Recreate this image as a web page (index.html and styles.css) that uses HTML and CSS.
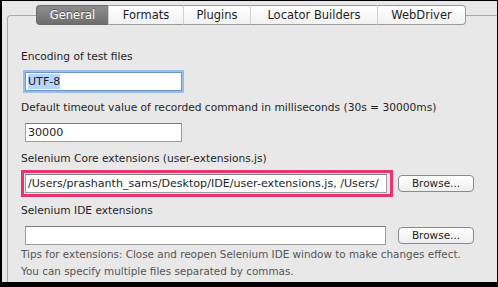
FILE: index.html
```html
<!DOCTYPE html>
<html lang="en">
<head>
    <meta charset="UTF-8">
    <meta name="viewport" content="width=device-width, initial-scale=1.0">
    <title>Selenium IDE Options</title>
    <link rel="stylesheet" href="styles.css">
</head>
<body>
    <div class="window">
        <div class="tabs">
            <div class="tab tab-general selected">General</div>
            <div class="tab tab-formats">Formats</div>
            <div class="tab tab-plugins">Plugins</div>
            <div class="tab tab-locators">Locator Builders</div>
            <div class="tab tab-webdriver">WebDriver</div>
        </div>
        <div class="panel">
            <div class="label">Encoding of test files</div>
            <div class="field short focused"><span class="selection">UTF-8</span></div>

            <div class="label gap">Default timeout value of recorded command in milliseconds (30s = 30000ms)</div>
            <div class="field short">30000</div>

            <div class="label gap">Selenium Core extensions (user-extensions.js)</div>
            <div class="row highlighted-row">
                <div class="highlight">
                    <div class="field long">/Users/prashanth_sams/Desktop/IDE/user-extensions.js, /Users/</div>
                </div>
                <div class="button">Browse...</div>
            </div>

            <div class="label gap-small">Selenium IDE extensions</div>
            <div class="row">
                <div class="field long plain"></div>
                <div class="button">Browse...</div>
            </div>

            <div class="tips">
                Tips for extensions: Close and reopen Selenium IDE window to make changes effect.<br>
                You can specify multiple files separated by commas.
            </div>
        </div>
    </div>
</body>
</html>
```

FILE: styles.css
```css
body {
    margin: 0;
    background-color: #000;
    font-family: "DejaVu Sans", "Liberation Sans", sans-serif;
    color: #1e1e1e;
}
.window {
    box-sizing: border-box;
    width: 498px;
    height: 287px;
    border-style: solid;
    border-color: #000;
    border-width: 1px 1px 5px 2px;
    background-color: #e8e8e8;
    display: flex;
    flex-direction: column;
}

/* tab strip */
.tabs {
    position: relative;
    z-index: 1;
    display: flex;
    margin: 4px 0 0 34px;
    height: 20px;
}
.tab {
    box-sizing: border-box;
    height: 20px;
    line-height: 18px;
    font-size: 11.5px;
    text-align: center;
    border-top: 1px solid #9a9a9a;
    border-bottom: 1px solid #9a9a9a;
    border-left: 1px solid #d0d0d0;
    background: linear-gradient(#ffffff, #f1f1f1);
}
.tab:first-child {
    border-left-color: #8a8a8a;
    border-radius: 4px 0 0 4px;
}
.tab:last-child {
    border-right: 1px solid #9a9a9a;
    border-radius: 0 4px 4px 0;
}
.tab.selected {
    color: #fff;
    border-color: #6a6a6a;
    background: linear-gradient(#8e8e8e, #6e6e6e);
    text-shadow: 0 -1px 0 #555;
}
.tab-general { width: 72px; }
.tab-formats { width: 75px; }
.tab-plugins { width: 67px; }
.tab-locators { width: 127px; }
.tab-webdriver { width: 89px; }

/* panel */
.panel {
    flex: 1;
    margin: -10px 0 0 5px;
    padding: 34px 0 0 13px;
    border-top: 1px solid #a8a8a8;
    border-left: 1px solid #a8a8a8;
    border-top-left-radius: 4px;
}
.label {
    font-size: 10.65px;
    line-height: 14px;
    height: 14px;
    white-space: nowrap;
}
.label.gap {
    margin-top: 10px;
}
.label.gap-small {
    margin-top: 7px;
}
.field {
    box-sizing: border-box;
    height: 19px;
    margin: 8px 0 0 4px;
    padding: 0 2px;
    font-size: 11.1px;
    line-height: 17px;
    white-space: nowrap;
    overflow: hidden;
    background-color: #fff;
    border: 1px solid #9c9c9c;
    border-top-color: #7d7d7d;
}
.field.short {
    width: 157px;
}
.field.long {
    width: 362px;
    margin: 0;
}
.field.plain {
    width: 361px;
    margin-left: 4px;
}
.field.focused {
    border-color: #6d96cc;
    box-shadow: 0 0 0 2px #9cbde6;
}
.selection {
    background-color: #b5d4fe;
    padding: 1px 0;
}

.row {
    display: flex;
    align-items: center;
    margin-top: 8px;
}
.highlighted-row {
    margin-top: 4px;
}
.highlight {
    border: 3px solid #e8336d;
    padding: 1px 3px 1px 1px;
}
.button {
    box-sizing: border-box;
    width: 76px;
    height: 17px;
    margin-left: 12px;
    font-size: 10.5px;
    line-height: 15px;
    text-align: center;
    border: 1px solid #8a8a8a;
    border-radius: 4px;
    background: linear-gradient(#ffffff, #efefef);
}
.highlighted-row .button {
    margin-left: 5px;
}
.tips {
    margin-top: 1px;
    font-size: 10.4px;
    line-height: 16.5px;
    color: #555;
    white-space: nowrap;
}
```
